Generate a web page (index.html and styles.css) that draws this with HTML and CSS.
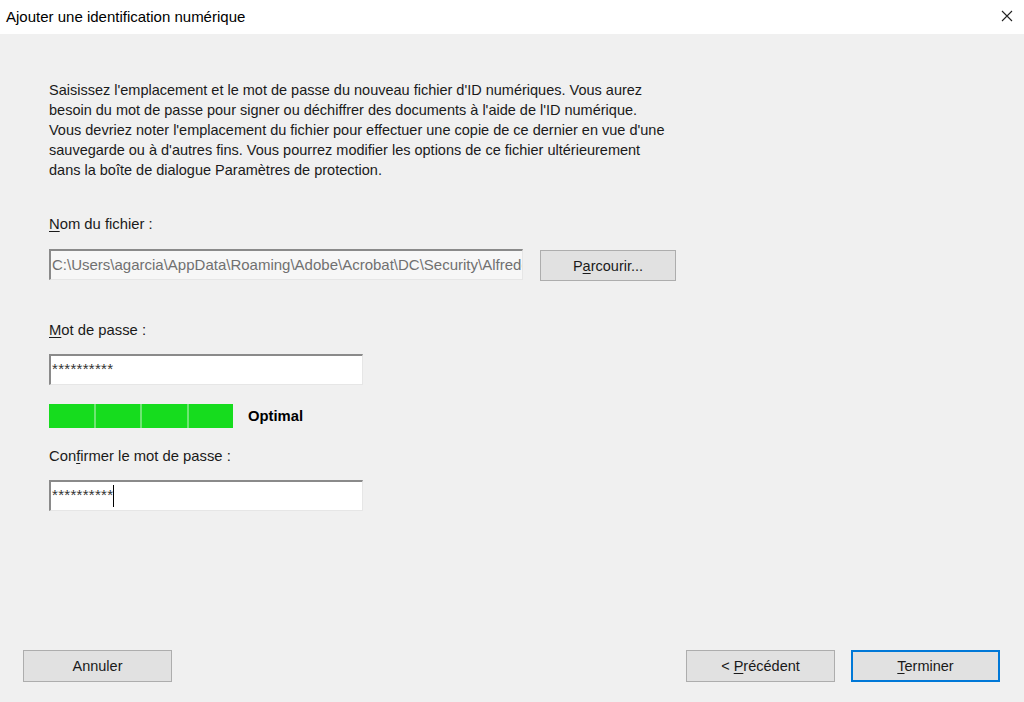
FILE: index.html
```html
<!DOCTYPE html>
<html lang="fr">
<head>
<meta charset="utf-8">
<title>Ajouter une identification numérique</title>
<link rel="stylesheet" href="styles.css">
</head>
<body>
<div class="dialog">
  <div class="titlebar">
    <span class="title">Ajouter une identification numérique</span>
    <span class="close">
      <svg width="12" height="12" viewBox="0 0 12 12"><path d="M1 1L11 11M11 1L1 11" stroke="#222" stroke-width="1.1" fill="none"/></svg>
    </span>
  </div>
  <div class="content">
    <p class="intro">Saisissez l'emplacement et le mot de passe du nouveau fichier d'ID numériques. Vous aurez<br>besoin du mot de passe pour signer ou déchiffrer des documents à l'aide de l'ID numérique.<br>Vous devriez noter l'emplacement du fichier pour effectuer une copie de ce dernier en vue d'une<br>sauvegarde ou à d'autres fins. Vous pourrez modifier les options de ce fichier ultérieurement<br>dans la boîte de dialogue Paramètres de protection.</p>

    <div class="label label-file"><u>N</u>om du fichier :</div>
    <div class="file-row">
      <input class="field field-file" type="text" readonly value="C:\Users\agarcia\AppData\Roaming\Adobe\Acrobat\DC\Security\AlfredoGarcia.pfx">
      <div class="btn btn-browse"><span>P<u>a</u>rcourir...</span></div>
    </div>

    <div class="label label-pass"><u>M</u>ot de passe :</div>
    <div class="field field-pass"><span class="stars">**********</span></div>

    <div class="strength">
      <div class="bar">
        <span class="seg"></span><span class="seg"></span><span class="seg"></span><span class="seg"></span>
      </div>
      <span class="strength-text">Optimal</span>
    </div>

    <div class="label label-confirm">Con<u>f</u>irmer le mot de passe :</div>
    <div class="field field-pass"><span class="stars">**********</span><span class="caret"></span></div>
  </div>
  <div class="footer">
    <div class="btn btn-footer"><span>Annuler</span></div>
    <div class="footer-right">
      <div class="btn btn-footer"><span>&lt; <u>P</u>récédent</span></div>
      <div class="btn btn-footer btn-default"><span><u>T</u>erminer</span></div>
    </div>
  </div>
</div>
</body>
</html>
```

FILE: styles.css
```css
* { box-sizing: border-box; }
html, body { margin: 0; padding: 0; }
body {
  font-family: "Liberation Sans", Arial, sans-serif;
  color: #1a1a1a;
  background: #f0f0f0;
}
.dialog {
  width: 1024px;
  height: 702px;
  display: flex;
  flex-direction: column;
  background: #f0f0f0;
}
.titlebar {
  height: 34px;
  background: #ffffff;
  display: flex;
  align-items: center;
  justify-content: space-between;
  padding: 0 11px 2px 6px;
}
.title {
  font-size: 15px;
  color: #000;
}
.close { display: flex; width: 12px; height: 12px; }
.content {
  flex: 1;
  padding: 46px 0 0 49px;
  font-size: 14.5px;
}
.intro {
  margin: 0;
  line-height: 20px;
  font-size: 14.5px;
  color: #1a1a1a;
}
.label {
  line-height: 20px;
  font-size: 14.8px;
  color: #1a1a1a;
}
.label u { text-decoration-thickness: 1px; text-underline-offset: 2px; }
.label-file { margin-top: 34px; }
.file-row {
  margin-top: 15px;
  display: flex;
  align-items: flex-start;
  gap: 17px;
}
.field {
  display: flex;
  align-items: flex-start;
  height: 31px;
  margin: 0;
  background: #ffffff;
  border-top: 2px solid #8a8a8a;
  border-left: 2px solid #8a8a8a;
  border-right: 1px solid #e6e6e6;
  border-bottom: 1px solid #e6e6e6;
  overflow: hidden;
  white-space: nowrap;
}
.field-file {
  width: 474px;
  background: #f7f7f7;
  padding: 0 0 2px 1px;
  font-family: "Liberation Sans", Arial, sans-serif;
  color: #707070;
  font-size: 15px;
  outline: none;
  border-radius: 0;
}
.btn {
  display: flex;
  align-items: center;
  justify-content: center;
  background: #e1e1e1;
  border: 1px solid #adadad;
  font-size: 14.5px;
  color: #1a1a1a;
  white-space: nowrap;
}
.btn u { text-underline-offset: 2px; text-decoration-thickness: 1px; }
.btn-browse {
  width: 136px;
  height: 31px;
  margin-top: 1px;
}
.label-pass { margin-top: 39px; }
.field-pass {
  width: 314px;
  margin-top: 14px;
  padding: 5px 0 0 1px;
}
.stars {
  font-size: 15px;
  line-height: 15px;
  color: #333;
  letter-spacing: 0.3px;
}
.caret {
  display: inline-block;
  width: 1px;
  height: 22px;
  margin-top: -2px;
  background: #000;
}
.strength {
  margin-top: 19px;
  display: flex;
  align-items: center;
  gap: 15px;
}
.bar {
  display: flex;
  width: 184px;
  height: 24px;
  gap: 2px;
  background: #6ee672;
}
.seg {
  flex: 1;
  background: #16dc1e;
}
.strength-text {
  font-weight: bold;
  font-size: 14.8px;
  color: #000;
}
.label-confirm { margin-top: 18px; }
.footer {
  display: flex;
  justify-content: space-between;
  align-items: center;
  padding: 0 24px 20px 23px;
}
.footer-right {
  display: flex;
  gap: 16px;
}
.btn-footer {
  width: 149px;
  height: 32px;
}
.btn-default {
  border: 2px solid #0078d7;
}
```
